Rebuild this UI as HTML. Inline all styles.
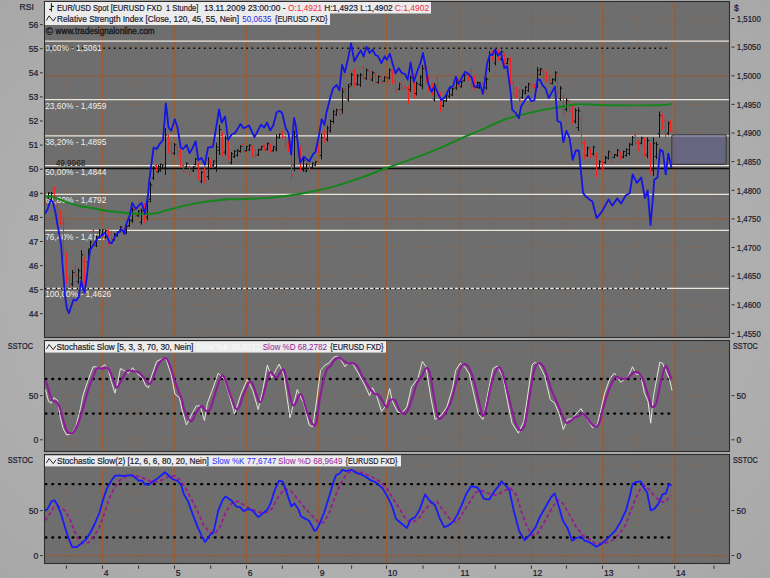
<!DOCTYPE html><html><head><meta charset="utf-8"><style>html,body{margin:0;padding:0;width:770px;height:578px;overflow:hidden;background:#b0b0b0}svg{display:block}text{font-family:"Liberation Sans",sans-serif}text.ax{stroke:#1a1a2e;stroke-width:0.2px}</style></head><body>
<svg width="770" height="578" viewBox="0 0 770 578">
<defs><radialGradient id="bg" cx="0.5" cy="0.5" r="0.75"><stop offset="0" stop-color="#bdbdbd"/><stop offset="1" stop-color="#a6a6a6"/></radialGradient>
<clipPath id="c0"><rect x="45.0" y="2.0" width="684.0" height="335.0"/></clipPath>
<clipPath id="c1"><rect x="45.0" y="341.0" width="684.0" height="110.0"/></clipPath>
<clipPath id="c2"><rect x="45.0" y="455.0" width="684.0" height="108.0"/></clipPath>
</defs>
<rect x="0" y="0" width="770" height="578" fill="url(#bg)"/>
<rect x="44.5" y="1.5" width="685.0" height="336.0" fill="#6e6e6e" stroke="#2e2e2e" stroke-width="1.1"/>
<rect x="44.5" y="340.5" width="685.0" height="111.0" fill="#6e6e6e" stroke="#2e2e2e" stroke-width="1.1"/>
<rect x="44.5" y="454.5" width="685.0" height="109.0" fill="#6e6e6e" stroke="#2e2e2e" stroke-width="1.1"/>
<g clip-path="url(#c0)">
<line x1="102.5" y1="1" x2="102.5" y2="337" stroke="#9c5a2c" stroke-width="0.9"/>
<line x1="174.5" y1="1" x2="174.5" y2="337" stroke="#9c5a2c" stroke-width="0.9"/>
<line x1="246.5" y1="1" x2="246.5" y2="337" stroke="#9c5a2c" stroke-width="0.9"/>
<line x1="318.5" y1="1" x2="318.5" y2="337" stroke="#9c5a2c" stroke-width="0.9"/>
<line x1="386.5" y1="1" x2="386.5" y2="337" stroke="#9c5a2c" stroke-width="0.9"/>
<line x1="459.2" y1="1" x2="459.2" y2="337" stroke="#9c5a2c" stroke-width="0.9"/>
<line x1="531.4" y1="1" x2="531.4" y2="337" stroke="#9c5a2c" stroke-width="0.9"/>
<line x1="602.6" y1="1" x2="602.6" y2="337" stroke="#9c5a2c" stroke-width="0.9"/>
<line x1="674.7" y1="1" x2="674.7" y2="337" stroke="#9c5a2c" stroke-width="0.9"/>
<line x1="66.4" y1="1" x2="66.4" y2="337" stroke="#9c5a2c" stroke-width="0.8" stroke-dasharray="0.8 2.96"/>
<line x1="138.6" y1="1" x2="138.6" y2="337" stroke="#9c5a2c" stroke-width="0.8" stroke-dasharray="0.8 2.96"/>
<line x1="210.7" y1="1" x2="210.7" y2="337" stroke="#9c5a2c" stroke-width="0.8" stroke-dasharray="0.8 2.96"/>
<line x1="282.3" y1="1" x2="282.3" y2="337" stroke="#9c5a2c" stroke-width="0.8" stroke-dasharray="0.8 2.96"/>
<line x1="351.6" y1="1" x2="351.6" y2="337" stroke="#9c5a2c" stroke-width="0.8" stroke-dasharray="0.8 2.96"/>
<line x1="423.0" y1="1" x2="423.0" y2="337" stroke="#9c5a2c" stroke-width="0.8" stroke-dasharray="0.8 2.96"/>
<line x1="495.3" y1="1" x2="495.3" y2="337" stroke="#9c5a2c" stroke-width="0.8" stroke-dasharray="0.8 2.96"/>
<line x1="566.4" y1="1" x2="566.4" y2="337" stroke="#9c5a2c" stroke-width="0.8" stroke-dasharray="0.8 2.96"/>
<line x1="638.7" y1="1" x2="638.7" y2="337" stroke="#9c5a2c" stroke-width="0.8" stroke-dasharray="0.8 2.96"/>
<line x1="714.0" y1="1" x2="714.0" y2="337" stroke="#9c5a2c" stroke-width="0.8" stroke-dasharray="0.8 2.96"/>
</g>
<g clip-path="url(#c1)">
<line x1="102.5" y1="340" x2="102.5" y2="451" stroke="#9c5a2c" stroke-width="0.9"/>
<line x1="174.5" y1="340" x2="174.5" y2="451" stroke="#9c5a2c" stroke-width="0.9"/>
<line x1="246.5" y1="340" x2="246.5" y2="451" stroke="#9c5a2c" stroke-width="0.9"/>
<line x1="318.5" y1="340" x2="318.5" y2="451" stroke="#9c5a2c" stroke-width="0.9"/>
<line x1="386.5" y1="340" x2="386.5" y2="451" stroke="#9c5a2c" stroke-width="0.9"/>
<line x1="459.2" y1="340" x2="459.2" y2="451" stroke="#9c5a2c" stroke-width="0.9"/>
<line x1="531.4" y1="340" x2="531.4" y2="451" stroke="#9c5a2c" stroke-width="0.9"/>
<line x1="602.6" y1="340" x2="602.6" y2="451" stroke="#9c5a2c" stroke-width="0.9"/>
<line x1="674.7" y1="340" x2="674.7" y2="451" stroke="#9c5a2c" stroke-width="0.9"/>
<line x1="66.4" y1="340" x2="66.4" y2="451" stroke="#9c5a2c" stroke-width="0.8" stroke-dasharray="0.8 2.96"/>
<line x1="138.6" y1="340" x2="138.6" y2="451" stroke="#9c5a2c" stroke-width="0.8" stroke-dasharray="0.8 2.96"/>
<line x1="210.7" y1="340" x2="210.7" y2="451" stroke="#9c5a2c" stroke-width="0.8" stroke-dasharray="0.8 2.96"/>
<line x1="282.3" y1="340" x2="282.3" y2="451" stroke="#9c5a2c" stroke-width="0.8" stroke-dasharray="0.8 2.96"/>
<line x1="351.6" y1="340" x2="351.6" y2="451" stroke="#9c5a2c" stroke-width="0.8" stroke-dasharray="0.8 2.96"/>
<line x1="423.0" y1="340" x2="423.0" y2="451" stroke="#9c5a2c" stroke-width="0.8" stroke-dasharray="0.8 2.96"/>
<line x1="495.3" y1="340" x2="495.3" y2="451" stroke="#9c5a2c" stroke-width="0.8" stroke-dasharray="0.8 2.96"/>
<line x1="566.4" y1="340" x2="566.4" y2="451" stroke="#9c5a2c" stroke-width="0.8" stroke-dasharray="0.8 2.96"/>
<line x1="638.7" y1="340" x2="638.7" y2="451" stroke="#9c5a2c" stroke-width="0.8" stroke-dasharray="0.8 2.96"/>
<line x1="714.0" y1="340" x2="714.0" y2="451" stroke="#9c5a2c" stroke-width="0.8" stroke-dasharray="0.8 2.96"/>
</g>
<g clip-path="url(#c2)">
<line x1="102.5" y1="454" x2="102.5" y2="563" stroke="#9c5a2c" stroke-width="0.9"/>
<line x1="174.5" y1="454" x2="174.5" y2="563" stroke="#9c5a2c" stroke-width="0.9"/>
<line x1="246.5" y1="454" x2="246.5" y2="563" stroke="#9c5a2c" stroke-width="0.9"/>
<line x1="318.5" y1="454" x2="318.5" y2="563" stroke="#9c5a2c" stroke-width="0.9"/>
<line x1="386.5" y1="454" x2="386.5" y2="563" stroke="#9c5a2c" stroke-width="0.9"/>
<line x1="459.2" y1="454" x2="459.2" y2="563" stroke="#9c5a2c" stroke-width="0.9"/>
<line x1="531.4" y1="454" x2="531.4" y2="563" stroke="#9c5a2c" stroke-width="0.9"/>
<line x1="602.6" y1="454" x2="602.6" y2="563" stroke="#9c5a2c" stroke-width="0.9"/>
<line x1="674.7" y1="454" x2="674.7" y2="563" stroke="#9c5a2c" stroke-width="0.9"/>
<line x1="66.4" y1="454" x2="66.4" y2="563" stroke="#9c5a2c" stroke-width="0.8" stroke-dasharray="0.8 2.96"/>
<line x1="138.6" y1="454" x2="138.6" y2="563" stroke="#9c5a2c" stroke-width="0.8" stroke-dasharray="0.8 2.96"/>
<line x1="210.7" y1="454" x2="210.7" y2="563" stroke="#9c5a2c" stroke-width="0.8" stroke-dasharray="0.8 2.96"/>
<line x1="282.3" y1="454" x2="282.3" y2="563" stroke="#9c5a2c" stroke-width="0.8" stroke-dasharray="0.8 2.96"/>
<line x1="351.6" y1="454" x2="351.6" y2="563" stroke="#9c5a2c" stroke-width="0.8" stroke-dasharray="0.8 2.96"/>
<line x1="423.0" y1="454" x2="423.0" y2="563" stroke="#9c5a2c" stroke-width="0.8" stroke-dasharray="0.8 2.96"/>
<line x1="495.3" y1="454" x2="495.3" y2="563" stroke="#9c5a2c" stroke-width="0.8" stroke-dasharray="0.8 2.96"/>
<line x1="566.4" y1="454" x2="566.4" y2="563" stroke="#9c5a2c" stroke-width="0.8" stroke-dasharray="0.8 2.96"/>
<line x1="638.7" y1="454" x2="638.7" y2="563" stroke="#9c5a2c" stroke-width="0.8" stroke-dasharray="0.8 2.96"/>
<line x1="714.0" y1="454" x2="714.0" y2="563" stroke="#9c5a2c" stroke-width="0.8" stroke-dasharray="0.8 2.96"/>
</g>
<line x1="44" y1="18.5" x2="729" y2="18.5" stroke="#9c5a2c" stroke-width="0.8" stroke-dasharray="0.8 2.96" clip-path="url(#c0)"/>
<line x1="44" y1="47.1" x2="729" y2="47.1" stroke="#9c5a2c" stroke-width="0.8" stroke-dasharray="0.8 2.96" clip-path="url(#c0)"/>
<line x1="44" y1="75.8" x2="729" y2="75.8" stroke="#9c5a2c" stroke-width="0.9" clip-path="url(#c0)"/>
<line x1="44" y1="104.4" x2="729" y2="104.4" stroke="#9c5a2c" stroke-width="0.8" stroke-dasharray="0.8 2.96" clip-path="url(#c0)"/>
<line x1="44" y1="133.0" x2="729" y2="133.0" stroke="#9c5a2c" stroke-width="0.8" stroke-dasharray="0.8 2.96" clip-path="url(#c0)"/>
<line x1="44" y1="161.6" x2="729" y2="161.6" stroke="#9c5a2c" stroke-width="0.8" stroke-dasharray="0.8 2.96" clip-path="url(#c0)"/>
<line x1="44" y1="190.3" x2="729" y2="190.3" stroke="#9c5a2c" stroke-width="0.8" stroke-dasharray="0.8 2.96" clip-path="url(#c0)"/>
<line x1="44" y1="218.9" x2="729" y2="218.9" stroke="#9c5a2c" stroke-width="0.9" clip-path="url(#c0)"/>
<line x1="44" y1="247.5" x2="729" y2="247.5" stroke="#9c5a2c" stroke-width="0.8" stroke-dasharray="0.8 2.96" clip-path="url(#c0)"/>
<line x1="44" y1="276.2" x2="729" y2="276.2" stroke="#9c5a2c" stroke-width="0.8" stroke-dasharray="0.8 2.96" clip-path="url(#c0)"/>
<line x1="44" y1="304.8" x2="729" y2="304.8" stroke="#9c5a2c" stroke-width="0.8" stroke-dasharray="0.8 2.96" clip-path="url(#c0)"/>
<line x1="44" y1="333.4" x2="729" y2="333.4" stroke="#9c5a2c" stroke-width="0.8" stroke-dasharray="0.8 2.96" clip-path="url(#c0)"/>
<line x1="44" y1="351.6" x2="729" y2="351.6" stroke="#9c5a2c" stroke-width="0.8" stroke-dasharray="0.8 2.96" clip-path="url(#c1)"/>
<line x1="44" y1="395.7" x2="729" y2="395.7" stroke="#9c5a2c" stroke-width="0.8" stroke-dasharray="0.8 2.96" clip-path="url(#c1)"/>
<line x1="44" y1="439.8" x2="729" y2="439.8" stroke="#9c5a2c" stroke-width="0.8" stroke-dasharray="0.8 2.96" clip-path="url(#c1)"/>
<line x1="44" y1="465.5" x2="729" y2="465.5" stroke="#9c5a2c" stroke-width="0.8" stroke-dasharray="0.8 2.96" clip-path="url(#c2)"/>
<line x1="44" y1="510.6" x2="729" y2="510.6" stroke="#9c5a2c" stroke-width="0.8" stroke-dasharray="0.8 2.96" clip-path="url(#c2)"/>
<line x1="44" y1="555.6" x2="729" y2="555.6" stroke="#9c5a2c" stroke-width="0.9" clip-path="url(#c2)"/>
<g clip-path="url(#c0)">
<line x1="44" y1="41.0" x2="729" y2="41.0" stroke="#ebe6dc" stroke-width="1.25"/>
<line x1="44" y1="99.5" x2="729" y2="99.5" stroke="#ebe6dc" stroke-width="1.25"/>
<line x1="44" y1="135.8" x2="729" y2="135.8" stroke="#ebe6dc" stroke-width="1.25"/>
<line x1="44" y1="165.7" x2="729" y2="165.7" stroke="#ebe6dc" stroke-width="1.25"/>
<line x1="44" y1="194.4" x2="729" y2="194.4" stroke="#ebe6dc" stroke-width="1.25"/>
<line x1="44" y1="230.4" x2="729" y2="230.4" stroke="#ebe6dc" stroke-width="1.25"/>
<line x1="44" y1="288.4" x2="729" y2="288.4" stroke="#ebe6dc" stroke-width="1.25"/>
<line x1="44" y1="168.5" x2="729" y2="168.5" stroke="#080808" stroke-width="1.5"/>
<rect x="671.8" y="134.8" width="54.4" height="29.6" rx="1.5" fill="#5e5e94" fill-opacity="0.5" stroke="#3c3c44" stroke-width="1.1"/>
<line x1="45" y1="48.2" x2="669" y2="48.2" stroke="#000" stroke-width="1.5" stroke-dasharray="1.5 3.8"/>
<line x1="45" y1="288.4" x2="669" y2="288.4" stroke="#000" stroke-width="1.5" stroke-dasharray="1.5 3.8"/>
<text x="45.2" y="50.5" font-size="8.4" fill="#f2f0ea" textLength="56.5" lengthAdjust="spacingAndGlyphs">0,00% - 1,5061</text>
<text x="45.2" y="109.0" font-size="8.4" fill="#f2f0ea" textLength="61.1" lengthAdjust="spacingAndGlyphs">23,60% - 1,4959</text>
<text x="45.2" y="145.3" font-size="8.4" fill="#f2f0ea" textLength="61.1" lengthAdjust="spacingAndGlyphs">38,20% - 1,4895</text>
<text x="45.2" y="174.9" font-size="8.4" fill="#f2f0ea" textLength="61.1" lengthAdjust="spacingAndGlyphs">50,00% - 1,4844</text>
<text x="45.2" y="203.3" font-size="8.4" fill="#f2f0ea" textLength="61.1" lengthAdjust="spacingAndGlyphs">61,80% - 1,4792</text>
<text x="45.2" y="239.5" font-size="8.4" fill="#f2f0ea" textLength="61.1" lengthAdjust="spacingAndGlyphs">76,40% - 1,4727</text>
<text x="45.2" y="297.3" font-size="8.4" fill="#f2f0ea" textLength="66.0" lengthAdjust="spacingAndGlyphs">100,00% - 1,4626</text>
<text x="55.7" y="166.3" font-size="8.4" fill="#151515" textLength="29.6" lengthAdjust="spacingAndGlyphs">49,9968</text>
<path d="M45.5 189.8V205.6M45.5 192.2h-1.8M45.5 203.2h1.8" stroke="#f02424" stroke-width="1" fill="none"/>
<path d="M48.5 192.0V199.0M48.5 197.9h-1.8M48.5 193.1h1.8" stroke="#101010" stroke-width="1" fill="none"/>
<path d="M51.5 192.0V200.8M51.5 199.5h-1.8M51.5 193.3h1.8" stroke="#101010" stroke-width="1" fill="none"/>
<path d="M54.5 186.2V198.3M54.5 188.0h-1.8M54.5 196.5h1.8" stroke="#f02424" stroke-width="1" fill="none"/>
<path d="M57.5 203.0V221.0M57.5 205.7h-1.8M57.5 218.3h1.8" stroke="#f02424" stroke-width="1" fill="none"/>
<path d="M60.5 209.8V225.6M60.5 212.2h-1.8M60.5 223.2h1.8" stroke="#f02424" stroke-width="1" fill="none"/>
<path d="M63.5 217.0V258.0M63.5 223.2h-1.8M63.5 251.8h1.8" stroke="#f02424" stroke-width="1" fill="none"/>
<path d="M66.5 252.8V284.0M66.5 257.5h-1.8M66.5 279.3h1.8" stroke="#f02424" stroke-width="1" fill="none"/>
<path d="M69.5 276.0V288.0M69.5 277.8h-1.8M69.5 286.2h1.8" stroke="#f02424" stroke-width="1" fill="none"/>
<path d="M72.5 270.0V286.6M72.5 284.1h-1.8M72.5 272.5h1.8" stroke="#101010" stroke-width="1" fill="none"/>
<path d="M75.5 265.0V276.8M75.5 266.8h-1.8M75.5 275.0h1.8" stroke="#f02424" stroke-width="1" fill="none"/>
<path d="M78.5 268.4V284.0M78.5 281.7h-1.8M78.5 270.7h1.8" stroke="#101010" stroke-width="1" fill="none"/>
<path d="M81.5 250.0V282.7M81.5 277.8h-1.8M81.5 254.9h1.8" stroke="#101010" stroke-width="1" fill="none"/>
<path d="M84.5 257.3V285.3M84.5 261.5h-1.8M84.5 281.1h1.8" stroke="#f02424" stroke-width="1" fill="none"/>
<path d="M88.5 249.0V264.5M88.5 262.2h-1.8M88.5 251.3h1.8" stroke="#101010" stroke-width="1" fill="none"/>
<path d="M90.5 240.7V250.0M90.5 248.6h-1.8M90.5 242.1h1.8" stroke="#101010" stroke-width="1" fill="none"/>
<path d="M93.5 228.8V244.9M93.5 231.2h-1.8M93.5 242.5h1.8" stroke="#f02424" stroke-width="1" fill="none"/>
<path d="M96.5 235.5V247.0M96.5 245.3h-1.8M96.5 237.2h1.8" stroke="#101010" stroke-width="1" fill="none"/>
<path d="M99.5 228.8V238.6M99.5 237.1h-1.8M99.5 230.3h1.8" stroke="#101010" stroke-width="1" fill="none"/>
<path d="M102.5 229.0V235.5M102.5 234.5h-1.8M102.5 230.0h1.8" stroke="#101010" stroke-width="1" fill="none"/>
<path d="M105.5 229.3V238.6M105.5 237.2h-1.8M105.5 230.7h1.8" stroke="#101010" stroke-width="1" fill="none"/>
<path d="M108.5 228.8V244.9M108.5 231.2h-1.8M108.5 242.5h1.8" stroke="#f02424" stroke-width="1" fill="none"/>
<path d="M111.5 230.8V240.7M111.5 232.3h-1.8M111.5 239.2h1.8" stroke="#f02424" stroke-width="1" fill="none"/>
<path d="M114.5 233.0V240.7M114.5 239.5h-1.8M114.5 234.2h1.8" stroke="#101010" stroke-width="1" fill="none"/>
<path d="M117.5 231.4V236.6M117.5 235.8h-1.8M117.5 232.2h1.8" stroke="#101010" stroke-width="1" fill="none"/>
<path d="M120.5 226.2V232.4M120.5 231.5h-1.8M120.5 227.1h1.8" stroke="#101010" stroke-width="1" fill="none"/>
<path d="M123.5 228.2V231.4M123.5 228.7h-1.8M123.5 230.9h1.8" stroke="#f02424" stroke-width="1" fill="none"/>
<path d="M126.5 225.1V234.0M126.5 232.7h-1.8M126.5 226.4h1.8" stroke="#101010" stroke-width="1" fill="none"/>
<path d="M129.5 218.9V226.7M129.5 225.5h-1.8M129.5 220.1h1.8" stroke="#101010" stroke-width="1" fill="none"/>
<path d="M132.5 207.5V223.0M132.5 220.7h-1.8M132.5 209.8h1.8" stroke="#101010" stroke-width="1" fill="none"/>
<path d="M135.5 207.5V216.8M135.5 208.9h-1.8M135.5 215.4h1.8" stroke="#f02424" stroke-width="1" fill="none"/>
<path d="M138.5 210.0V216.8M138.5 215.8h-1.8M138.5 211.0h1.8" stroke="#101010" stroke-width="1" fill="none"/>
<path d="M141.5 208.5V224.6M141.5 222.2h-1.8M141.5 210.9h1.8" stroke="#101010" stroke-width="1" fill="none"/>
<path d="M144.5 203.3V223.0M144.5 206.3h-1.8M144.5 220.0h1.8" stroke="#f02424" stroke-width="1" fill="none"/>
<path d="M147.5 198.0V220.5M147.5 217.1h-1.8M147.5 201.4h1.8" stroke="#101010" stroke-width="1" fill="none"/>
<path d="M150.5 182.0V202.3M150.5 199.3h-1.8M150.5 185.0h1.8" stroke="#101010" stroke-width="1" fill="none"/>
<path d="M153.5 166.0V180.0M153.5 177.9h-1.8M153.5 168.1h1.8" stroke="#101010" stroke-width="1" fill="none"/>
<path d="M156.5 164.6V171.5M156.5 165.6h-1.8M156.5 170.5h1.8" stroke="#f02424" stroke-width="1" fill="none"/>
<path d="M158.5 165.0V173.0M158.5 171.8h-1.8M158.5 166.2h1.8" stroke="#101010" stroke-width="1" fill="none"/>
<path d="M160.5 163.4V171.8M160.5 170.5h-1.8M160.5 164.7h1.8" stroke="#101010" stroke-width="1" fill="none"/>
<path d="M162.5 164.5V168.6M162.5 168.0h-1.8M162.5 165.1h1.8" stroke="#101010" stroke-width="1" fill="none"/>
<path d="M165.5 128.0V174.9M165.5 167.9h-1.8M165.5 135.0h1.8" stroke="#101010" stroke-width="1" fill="none"/>
<path d="M168.5 134.9V153.6M168.5 137.7h-1.8M168.5 150.8h1.8" stroke="#f02424" stroke-width="1" fill="none"/>
<path d="M171.5 142.0V155.0M171.5 143.9h-1.8M171.5 153.1h1.8" stroke="#f02424" stroke-width="1" fill="none"/>
<path d="M174.5 143.0V155.0M174.5 153.2h-1.8M174.5 144.8h1.8" stroke="#101010" stroke-width="1" fill="none"/>
<path d="M177.5 145.8V157.2M177.5 147.5h-1.8M177.5 155.5h1.8" stroke="#f02424" stroke-width="1" fill="none"/>
<path d="M180.5 149.0V167.6M180.5 151.8h-1.8M180.5 164.8h1.8" stroke="#f02424" stroke-width="1" fill="none"/>
<path d="M183.5 164.5V172.8M183.5 165.7h-1.8M183.5 171.6h1.8" stroke="#f02424" stroke-width="1" fill="none"/>
<path d="M186.5 162.4V167.6M186.5 166.8h-1.8M186.5 163.2h1.8" stroke="#101010" stroke-width="1" fill="none"/>
<path d="M189.5 165.5V175.9M189.5 167.1h-1.8M189.5 174.3h1.8" stroke="#f02424" stroke-width="1" fill="none"/>
<path d="M193.5 166.0V171.8M193.5 170.9h-1.8M193.5 166.9h1.8" stroke="#101010" stroke-width="1" fill="none"/>
<path d="M195.5 158.0V165.5M195.5 164.4h-1.8M195.5 159.1h1.8" stroke="#101010" stroke-width="1" fill="none"/>
<path d="M198.5 162.4V180.0M198.5 165.0h-1.8M198.5 177.4h1.8" stroke="#f02424" stroke-width="1" fill="none"/>
<path d="M201.5 170.7V183.2M201.5 181.3h-1.8M201.5 172.6h1.8" stroke="#101010" stroke-width="1" fill="none"/>
<path d="M204.5 167.6V183.2M204.5 169.9h-1.8M204.5 180.9h1.8" stroke="#f02424" stroke-width="1" fill="none"/>
<path d="M208.5 157.2V180.0M208.5 176.6h-1.8M208.5 160.6h1.8" stroke="#101010" stroke-width="1" fill="none"/>
<path d="M210.5 159.3V167.6M210.5 160.5h-1.8M210.5 166.4h1.8" stroke="#f02424" stroke-width="1" fill="none"/>
<path d="M213.5 160.3V166.6M213.5 165.7h-1.8M213.5 161.2h1.8" stroke="#101010" stroke-width="1" fill="none"/>
<path d="M216.5 142.7V171.8M216.5 167.4h-1.8M216.5 147.1h1.8" stroke="#101010" stroke-width="1" fill="none"/>
<path d="M219.5 125.0V155.0M219.5 150.5h-1.8M219.5 129.5h1.8" stroke="#101010" stroke-width="1" fill="none"/>
<path d="M222.5 131.8V156.2M222.5 135.5h-1.8M222.5 152.5h1.8" stroke="#f02424" stroke-width="1" fill="none"/>
<path d="M225.5 135.4V155.1M225.5 152.1h-1.8M225.5 138.4h1.8" stroke="#101010" stroke-width="1" fill="none"/>
<path d="M228.5 140.6V160.3M228.5 143.6h-1.8M228.5 157.3h1.8" stroke="#f02424" stroke-width="1" fill="none"/>
<path d="M231.5 152.0V164.5M231.5 162.6h-1.8M231.5 153.9h1.8" stroke="#101010" stroke-width="1" fill="none"/>
<path d="M234.5 150.0V158.0M234.5 156.8h-1.8M234.5 151.2h1.8" stroke="#101010" stroke-width="1" fill="none"/>
<path d="M237.5 149.2V156.6M237.5 155.5h-1.8M237.5 150.3h1.8" stroke="#101010" stroke-width="1" fill="none"/>
<path d="M240.5 145.3V152.6M240.5 151.5h-1.8M240.5 146.4h1.8" stroke="#101010" stroke-width="1" fill="none"/>
<path d="M243.5 143.0V153.2M243.5 144.5h-1.8M243.5 151.7h1.8" stroke="#f02424" stroke-width="1" fill="none"/>
<path d="M246.5 145.9V151.5M246.5 150.7h-1.8M246.5 146.7h1.8" stroke="#101010" stroke-width="1" fill="none"/>
<path d="M249.5 144.2V150.9M249.5 149.9h-1.8M249.5 145.2h1.8" stroke="#101010" stroke-width="1" fill="none"/>
<path d="M252.5 145.3V157.1M252.5 147.1h-1.8M252.5 155.3h1.8" stroke="#f02424" stroke-width="1" fill="none"/>
<path d="M255.5 149.2V157.1M255.5 150.4h-1.8M255.5 155.9h1.8" stroke="#f02424" stroke-width="1" fill="none"/>
<path d="M258.5 148.7V156.0M258.5 154.9h-1.8M258.5 149.8h1.8" stroke="#101010" stroke-width="1" fill="none"/>
<path d="M261.5 145.9V150.4M261.5 149.7h-1.8M261.5 146.6h1.8" stroke="#101010" stroke-width="1" fill="none"/>
<path d="M264.5 144.7V150.9M264.5 145.6h-1.8M264.5 150.0h1.8" stroke="#f02424" stroke-width="1" fill="none"/>
<path d="M267.5 142.5V150.4M267.5 149.2h-1.8M267.5 143.7h1.8" stroke="#101010" stroke-width="1" fill="none"/>
<path d="M270.5 143.6V152.6M270.5 144.9h-1.8M270.5 151.2h1.8" stroke="#f02424" stroke-width="1" fill="none"/>
<path d="M273.5 145.9V151.5M273.5 150.7h-1.8M273.5 146.7h1.8" stroke="#101010" stroke-width="1" fill="none"/>
<path d="M276.5 134.6V151.5M276.5 149.0h-1.8M276.5 137.1h1.8" stroke="#101010" stroke-width="1" fill="none"/>
<path d="M279.5 133.5V138.6M279.5 137.8h-1.8M279.5 134.3h1.8" stroke="#101010" stroke-width="1" fill="none"/>
<path d="M282.5 130.7V138.0M282.5 131.8h-1.8M282.5 136.9h1.8" stroke="#f02424" stroke-width="1" fill="none"/>
<path d="M285.5 135.7V147.6M285.5 137.5h-1.8M285.5 145.8h1.8" stroke="#f02424" stroke-width="1" fill="none"/>
<path d="M288.5 140.2V152.0M288.5 142.0h-1.8M288.5 150.2h1.8" stroke="#f02424" stroke-width="1" fill="none"/>
<path d="M291.5 141.4V181.3M291.5 147.4h-1.8M291.5 175.3h1.8" stroke="#f02424" stroke-width="1" fill="none"/>
<path d="M294.5 130.7V171.2M294.5 165.1h-1.8M294.5 136.8h1.8" stroke="#101010" stroke-width="1" fill="none"/>
<path d="M297.5 124.5V158.2M297.5 129.6h-1.8M297.5 153.1h1.8" stroke="#f02424" stroke-width="1" fill="none"/>
<path d="M300.5 145.9V171.2M300.5 149.7h-1.8M300.5 167.4h1.8" stroke="#f02424" stroke-width="1" fill="none"/>
<path d="M303.5 158.2V171.7M303.5 169.7h-1.8M303.5 160.2h1.8" stroke="#101010" stroke-width="1" fill="none"/>
<path d="M306.5 163.3V172.3M306.5 171.0h-1.8M306.5 164.7h1.8" stroke="#101010" stroke-width="1" fill="none"/>
<path d="M309.5 163.3V170.6M309.5 164.4h-1.8M309.5 169.5h1.8" stroke="#f02424" stroke-width="1" fill="none"/>
<path d="M312.5 162.4V168.3M312.5 167.4h-1.8M312.5 163.3h1.8" stroke="#101010" stroke-width="1" fill="none"/>
<path d="M315.5 161.0V166.0M315.5 165.2h-1.8M315.5 161.8h1.8" stroke="#101010" stroke-width="1" fill="none"/>
<path d="M318.5 145.5V153.4M318.5 146.7h-1.8M318.5 152.2h1.8" stroke="#f02424" stroke-width="1" fill="none"/>
<path d="M321.5 133.6V159.4M321.5 155.5h-1.8M321.5 137.5h1.8" stroke="#101010" stroke-width="1" fill="none"/>
<path d="M324.5 129.6V142.5M324.5 131.5h-1.8M324.5 140.6h1.8" stroke="#f02424" stroke-width="1" fill="none"/>
<path d="M327.5 125.6V141.5M327.5 139.1h-1.8M327.5 128.0h1.8" stroke="#101010" stroke-width="1" fill="none"/>
<path d="M330.5 119.6V132.6M330.5 130.7h-1.8M330.5 121.5h1.8" stroke="#101010" stroke-width="1" fill="none"/>
<path d="M333.5 109.7V123.6M333.5 121.5h-1.8M333.5 111.8h1.8" stroke="#101010" stroke-width="1" fill="none"/>
<path d="M336.5 108.7V115.7M336.5 114.7h-1.8M336.5 109.8h1.8" stroke="#101010" stroke-width="1" fill="none"/>
<path d="M339.5 108.7V115.7M339.5 109.8h-1.8M339.5 114.7h1.8" stroke="#f02424" stroke-width="1" fill="none"/>
<path d="M342.5 87.8V113.7M342.5 109.8h-1.8M342.5 91.7h1.8" stroke="#101010" stroke-width="1" fill="none"/>
<path d="M345.5 86.8V98.8M345.5 88.6h-1.8M345.5 97.0h1.8" stroke="#f02424" stroke-width="1" fill="none"/>
<path d="M348.5 83.9V101.8M348.5 99.1h-1.8M348.5 86.6h1.8" stroke="#101010" stroke-width="1" fill="none"/>
<path d="M351.5 72.9V85.8M351.5 83.9h-1.8M351.5 74.8h1.8" stroke="#101010" stroke-width="1" fill="none"/>
<path d="M354.5 68.9V86.8M354.5 71.6h-1.8M354.5 84.1h1.8" stroke="#f02424" stroke-width="1" fill="none"/>
<path d="M357.5 73.9V85.8M357.5 84.0h-1.8M357.5 75.7h1.8" stroke="#101010" stroke-width="1" fill="none"/>
<path d="M360.5 73.0V86.8M360.5 84.7h-1.8M360.5 75.1h1.8" stroke="#101010" stroke-width="1" fill="none"/>
<path d="M363.5 65.0V80.9M363.5 67.4h-1.8M363.5 78.5h1.8" stroke="#f02424" stroke-width="1" fill="none"/>
<path d="M366.5 68.5V79.9M366.5 78.2h-1.8M366.5 70.2h1.8" stroke="#101010" stroke-width="1" fill="none"/>
<path d="M369.5 69.5V78.9M369.5 70.9h-1.8M369.5 77.5h1.8" stroke="#f02424" stroke-width="1" fill="none"/>
<path d="M372.5 71.1V81.5M372.5 79.9h-1.8M372.5 72.7h1.8" stroke="#101010" stroke-width="1" fill="none"/>
<path d="M375.5 72.1V84.1M375.5 73.9h-1.8M375.5 82.3h1.8" stroke="#f02424" stroke-width="1" fill="none"/>
<path d="M378.5 75.3V83.6M378.5 82.4h-1.8M378.5 76.5h1.8" stroke="#101010" stroke-width="1" fill="none"/>
<path d="M381.5 76.8V83.6M381.5 77.8h-1.8M381.5 82.6h1.8" stroke="#f02424" stroke-width="1" fill="none"/>
<path d="M384.5 76.3V82.0M384.5 81.1h-1.8M384.5 77.2h1.8" stroke="#101010" stroke-width="1" fill="none"/>
<path d="M387.5 75.3V83.0M387.5 76.5h-1.8M387.5 81.8h1.8" stroke="#f02424" stroke-width="1" fill="none"/>
<path d="M389.5 68.5V79.4M389.5 77.8h-1.8M389.5 70.1h1.8" stroke="#101010" stroke-width="1" fill="none"/>
<path d="M392.5 69.5V84.6M392.5 71.8h-1.8M392.5 82.3h1.8" stroke="#f02424" stroke-width="1" fill="none"/>
<path d="M395.5 79.4V92.9M395.5 81.4h-1.8M395.5 90.9h1.8" stroke="#f02424" stroke-width="1" fill="none"/>
<path d="M399.5 82.5V90.3M399.5 89.1h-1.8M399.5 83.7h1.8" stroke="#101010" stroke-width="1" fill="none"/>
<path d="M401.5 82.5V89.3M401.5 83.5h-1.8M401.5 88.3h1.8" stroke="#f02424" stroke-width="1" fill="none"/>
<path d="M405.5 86.2V89.8M405.5 86.7h-1.8M405.5 89.3h1.8" stroke="#f02424" stroke-width="1" fill="none"/>
<path d="M408.5 85.1V103.8M408.5 87.9h-1.8M408.5 101.0h1.8" stroke="#f02424" stroke-width="1" fill="none"/>
<path d="M410.5 75.3V91.9M410.5 89.4h-1.8M410.5 77.8h1.8" stroke="#101010" stroke-width="1" fill="none"/>
<path d="M414.5 75.3V98.1M414.5 78.7h-1.8M414.5 94.7h1.8" stroke="#f02424" stroke-width="1" fill="none"/>
<path d="M416.5 81.5V95.5M416.5 93.4h-1.8M416.5 83.6h1.8" stroke="#101010" stroke-width="1" fill="none"/>
<path d="M420.5 75.3V86.2M420.5 84.6h-1.8M420.5 76.9h1.8" stroke="#101010" stroke-width="1" fill="none"/>
<path d="M422.5 64.9V89.3M422.5 85.6h-1.8M422.5 68.6h1.8" stroke="#101010" stroke-width="1" fill="none"/>
<path d="M426.5 65.9V82.5M426.5 68.4h-1.8M426.5 80.0h1.8" stroke="#f02424" stroke-width="1" fill="none"/>
<path d="M428.5 75.8V91.4M428.5 78.1h-1.8M428.5 89.1h1.8" stroke="#f02424" stroke-width="1" fill="none"/>
<path d="M432.5 83.0V95.5M432.5 84.9h-1.8M432.5 93.6h1.8" stroke="#f02424" stroke-width="1" fill="none"/>
<path d="M434.5 83.0V101.8M434.5 99.0h-1.8M434.5 85.8h1.8" stroke="#101010" stroke-width="1" fill="none"/>
<path d="M437.5 74.7V96.6M437.5 78.0h-1.8M437.5 93.3h1.8" stroke="#f02424" stroke-width="1" fill="none"/>
<path d="M440.5 91.4V111.6M440.5 94.4h-1.8M440.5 108.6h1.8" stroke="#f02424" stroke-width="1" fill="none"/>
<path d="M443.5 99.7V107.0M443.5 105.9h-1.8M443.5 100.8h1.8" stroke="#101010" stroke-width="1" fill="none"/>
<path d="M446.5 94.0V102.0M446.5 100.8h-1.8M446.5 95.2h1.8" stroke="#101010" stroke-width="1" fill="none"/>
<path d="M449.5 86.7V98.1M449.5 96.4h-1.8M449.5 88.4h1.8" stroke="#101010" stroke-width="1" fill="none"/>
<path d="M452.5 87.7V96.0M452.5 94.8h-1.8M452.5 88.9h1.8" stroke="#101010" stroke-width="1" fill="none"/>
<path d="M456.5 77.3V89.8M456.5 87.9h-1.8M456.5 79.2h1.8" stroke="#101010" stroke-width="1" fill="none"/>
<path d="M458.5 79.4V86.7M458.5 80.5h-1.8M458.5 85.6h1.8" stroke="#f02424" stroke-width="1" fill="none"/>
<path d="M461.5 81.0V87.7M461.5 86.7h-1.8M461.5 82.0h1.8" stroke="#101010" stroke-width="1" fill="none"/>
<path d="M464.5 73.7V81.5M464.5 80.3h-1.8M464.5 74.9h1.8" stroke="#101010" stroke-width="1" fill="none"/>
<path d="M468.5 73.2V81.0M468.5 74.4h-1.8M468.5 79.8h1.8" stroke="#f02424" stroke-width="1" fill="none"/>
<path d="M471.5 68.0V89.8M471.5 71.3h-1.8M471.5 86.5h1.8" stroke="#f02424" stroke-width="1" fill="none"/>
<path d="M474.5 75.2V89.8M474.5 77.4h-1.8M474.5 87.6h1.8" stroke="#f02424" stroke-width="1" fill="none"/>
<path d="M477.5 81.5V88.2M477.5 87.2h-1.8M477.5 82.5h1.8" stroke="#101010" stroke-width="1" fill="none"/>
<path d="M479.5 82.0V88.8M479.5 87.8h-1.8M479.5 83.0h1.8" stroke="#101010" stroke-width="1" fill="none"/>
<path d="M483.5 82.5V94.0M483.5 84.2h-1.8M483.5 92.3h1.8" stroke="#f02424" stroke-width="1" fill="none"/>
<path d="M486.5 77.3V89.8M486.5 87.9h-1.8M486.5 79.2h1.8" stroke="#101010" stroke-width="1" fill="none"/>
<path d="M489.5 51.4V72.1M489.5 69.0h-1.8M489.5 54.5h1.8" stroke="#101010" stroke-width="1" fill="none"/>
<path d="M492.5 50.3V60.7M492.5 51.9h-1.8M492.5 59.1h1.8" stroke="#f02424" stroke-width="1" fill="none"/>
<path d="M495.5 49.3V65.4M495.5 63.0h-1.8M495.5 51.7h1.8" stroke="#101010" stroke-width="1" fill="none"/>
<path d="M498.5 49.3V60.7M498.5 51.0h-1.8M498.5 59.0h1.8" stroke="#f02424" stroke-width="1" fill="none"/>
<path d="M501.5 50.3V60.7M501.5 59.1h-1.8M501.5 51.9h1.8" stroke="#101010" stroke-width="1" fill="none"/>
<path d="M504.5 53.4V68.0M504.5 55.6h-1.8M504.5 65.8h1.8" stroke="#f02424" stroke-width="1" fill="none"/>
<path d="M507.5 58.1V64.3M507.5 63.4h-1.8M507.5 59.0h1.8" stroke="#101010" stroke-width="1" fill="none"/>
<path d="M510.5 57.1V86.7M510.5 61.5h-1.8M510.5 82.3h1.8" stroke="#f02424" stroke-width="1" fill="none"/>
<path d="M513.5 80.5V96.6M513.5 82.9h-1.8M513.5 94.2h1.8" stroke="#f02424" stroke-width="1" fill="none"/>
<path d="M516.5 86.6V98.2M516.5 88.3h-1.8M516.5 96.5h1.8" stroke="#f02424" stroke-width="1" fill="none"/>
<path d="M519.5 88.8V102.1M519.5 90.8h-1.8M519.5 100.1h1.8" stroke="#f02424" stroke-width="1" fill="none"/>
<path d="M522.5 89.4V98.8M522.5 97.4h-1.8M522.5 90.8h1.8" stroke="#101010" stroke-width="1" fill="none"/>
<path d="M525.5 86.0V94.3M525.5 93.1h-1.8M525.5 87.2h1.8" stroke="#101010" stroke-width="1" fill="none"/>
<path d="M528.5 82.7V92.1M528.5 90.7h-1.8M528.5 84.1h1.8" stroke="#101010" stroke-width="1" fill="none"/>
<path d="M531.5 83.3V87.7M531.5 84.0h-1.8M531.5 87.0h1.8" stroke="#f02424" stroke-width="1" fill="none"/>
<path d="M534.5 84.0V88.5M534.5 84.7h-1.8M534.5 87.8h1.8" stroke="#f02424" stroke-width="1" fill="none"/>
<path d="M537.5 67.2V87.7M537.5 84.6h-1.8M537.5 70.3h1.8" stroke="#101010" stroke-width="1" fill="none"/>
<path d="M540.5 67.8V75.5M540.5 74.3h-1.8M540.5 69.0h1.8" stroke="#101010" stroke-width="1" fill="none"/>
<path d="M543.5 70.0V79.4M543.5 71.4h-1.8M543.5 78.0h1.8" stroke="#f02424" stroke-width="1" fill="none"/>
<path d="M546.5 70.5V82.2M546.5 72.3h-1.8M546.5 80.4h1.8" stroke="#f02424" stroke-width="1" fill="none"/>
<path d="M549.5 75.5V83.8M549.5 76.7h-1.8M549.5 82.6h1.8" stroke="#f02424" stroke-width="1" fill="none"/>
<path d="M552.5 78.3V84.4M552.5 83.5h-1.8M552.5 79.2h1.8" stroke="#101010" stroke-width="1" fill="none"/>
<path d="M555.5 71.1V81.6M555.5 80.0h-1.8M555.5 72.7h1.8" stroke="#101010" stroke-width="1" fill="none"/>
<path d="M557.5 71.1V96.6M557.5 74.9h-1.8M557.5 92.8h1.8" stroke="#f02424" stroke-width="1" fill="none"/>
<path d="M560.5 86.0V101.0M560.5 98.8h-1.8M560.5 88.2h1.8" stroke="#101010" stroke-width="1" fill="none"/>
<path d="M563.5 94.9V117.6M563.5 98.3h-1.8M563.5 114.2h1.8" stroke="#f02424" stroke-width="1" fill="none"/>
<path d="M566.5 98.2V111.5M566.5 109.5h-1.8M566.5 100.2h1.8" stroke="#101010" stroke-width="1" fill="none"/>
<path d="M569.5 99.9V113.2M569.5 101.9h-1.8M569.5 111.2h1.8" stroke="#f02424" stroke-width="1" fill="none"/>
<path d="M572.5 103.2V124.0M572.5 106.3h-1.8M572.5 120.9h1.8" stroke="#f02424" stroke-width="1" fill="none"/>
<path d="M575.5 108.3V123.5M575.5 121.2h-1.8M575.5 110.6h1.8" stroke="#101010" stroke-width="1" fill="none"/>
<path d="M578.5 107.6V131.1M578.5 127.6h-1.8M578.5 111.1h1.8" stroke="#101010" stroke-width="1" fill="none"/>
<path d="M581.5 113.8V148.4M581.5 119.0h-1.8M581.5 143.2h1.8" stroke="#f02424" stroke-width="1" fill="none"/>
<path d="M584.5 140.1V159.5M584.5 143.0h-1.8M584.5 156.6h1.8" stroke="#f02424" stroke-width="1" fill="none"/>
<path d="M587.5 146.4V156.7M587.5 155.2h-1.8M587.5 147.9h1.8" stroke="#101010" stroke-width="1" fill="none"/>
<path d="M590.5 148.4V158.1M590.5 149.9h-1.8M590.5 156.6h1.8" stroke="#f02424" stroke-width="1" fill="none"/>
<path d="M593.5 145.7V155.4M593.5 153.9h-1.8M593.5 147.2h1.8" stroke="#101010" stroke-width="1" fill="none"/>
<path d="M596.5 152.6V177.5M596.5 156.3h-1.8M596.5 173.8h1.8" stroke="#f02424" stroke-width="1" fill="none"/>
<path d="M599.5 160.2V169.2M599.5 167.8h-1.8M599.5 161.5h1.8" stroke="#101010" stroke-width="1" fill="none"/>
<path d="M602.5 160.9V170.6M602.5 162.4h-1.8M602.5 169.1h1.8" stroke="#f02424" stroke-width="1" fill="none"/>
<path d="M605.5 156.0V163.7M605.5 162.5h-1.8M605.5 157.2h1.8" stroke="#101010" stroke-width="1" fill="none"/>
<path d="M608.5 150.5V159.5M608.5 158.2h-1.8M608.5 151.8h1.8" stroke="#101010" stroke-width="1" fill="none"/>
<path d="M611.5 152.6V163.0M611.5 154.2h-1.8M611.5 161.4h1.8" stroke="#f02424" stroke-width="1" fill="none"/>
<path d="M614.5 154.0V158.1M614.5 157.5h-1.8M614.5 154.6h1.8" stroke="#101010" stroke-width="1" fill="none"/>
<path d="M617.5 149.1V156.7M617.5 155.6h-1.8M617.5 150.2h1.8" stroke="#101010" stroke-width="1" fill="none"/>
<path d="M620.5 151.2V159.5M620.5 152.4h-1.8M620.5 158.3h1.8" stroke="#f02424" stroke-width="1" fill="none"/>
<path d="M623.5 150.5V158.1M623.5 157.0h-1.8M623.5 151.6h1.8" stroke="#101010" stroke-width="1" fill="none"/>
<path d="M626.5 148.4V156.7M626.5 155.5h-1.8M626.5 149.6h1.8" stroke="#101010" stroke-width="1" fill="none"/>
<path d="M629.5 142.9V155.4M629.5 153.5h-1.8M629.5 144.8h1.8" stroke="#101010" stroke-width="1" fill="none"/>
<path d="M632.5 136.0V145.7M632.5 144.2h-1.8M632.5 137.5h1.8" stroke="#101010" stroke-width="1" fill="none"/>
<path d="M635.5 133.2V145.0M635.5 135.0h-1.8M635.5 143.2h1.8" stroke="#f02424" stroke-width="1" fill="none"/>
<path d="M638.5 140.1V151.2M638.5 141.8h-1.8M638.5 149.5h1.8" stroke="#f02424" stroke-width="1" fill="none"/>
<path d="M641.5 136.7V144.3M641.5 143.2h-1.8M641.5 137.8h1.8" stroke="#101010" stroke-width="1" fill="none"/>
<path d="M644.5 137.4V156.7M644.5 140.3h-1.8M644.5 153.8h1.8" stroke="#f02424" stroke-width="1" fill="none"/>
<path d="M647.5 137.4V158.1M647.5 155.0h-1.8M647.5 140.5h1.8" stroke="#101010" stroke-width="1" fill="none"/>
<path d="M650.5 142.9V174.7M650.5 147.7h-1.8M650.5 169.9h1.8" stroke="#f02424" stroke-width="1" fill="none"/>
<path d="M653.5 137.4V176.1M653.5 170.3h-1.8M653.5 143.2h1.8" stroke="#101010" stroke-width="1" fill="none"/>
<path d="M656.5 141.8V159.1M656.5 156.5h-1.8M656.5 144.4h1.8" stroke="#101010" stroke-width="1" fill="none"/>
<path d="M659.5 111.5V137.5M659.5 133.6h-1.8M659.5 115.4h1.8" stroke="#101010" stroke-width="1" fill="none"/>
<path d="M662.5 113.7V129.9M662.5 116.1h-1.8M662.5 127.5h1.8" stroke="#f02424" stroke-width="1" fill="none"/>
<path d="M665.5 118.0V137.5M665.5 120.9h-1.8M665.5 134.6h1.8" stroke="#f02424" stroke-width="1" fill="none"/>
<path d="M668.5 121.2V135.3M668.5 133.2h-1.8M668.5 123.3h1.8" stroke="#101010" stroke-width="1" fill="none"/>
<path d="M670.5 120.2V132.1M670.5 122.0h-1.8M670.5 130.3h1.8" stroke="#f02424" stroke-width="1" fill="none"/>
<path d="M45.2 196.9C46.2 196.8 49.1 196.2 51.3 196.5C53.5 196.8 55.7 197.9 58.5 198.9C61.3 199.9 64.5 201.4 68.2 202.6C71.9 203.8 76.4 205.3 80.4 206.2C84.5 207.1 88.6 207.3 92.5 208.0C96.4 208.7 98.8 209.7 104.0 210.5C109.2 211.3 118.8 212.1 124.0 212.7C129.2 213.2 130.5 213.6 135.3 213.8C140.1 214.0 146.8 214.5 152.6 213.8C158.3 213.1 163.2 211.1 169.8 209.5C176.4 207.9 182.6 205.8 191.9 204.1C201.2 202.4 217.6 200.3 225.6 199.5C233.6 198.7 232.4 199.5 240.0 199.2C247.6 198.9 260.8 198.5 271.2 197.6C281.6 196.7 291.9 195.3 302.3 193.5C312.7 191.7 323.1 189.5 333.5 186.7C343.9 183.8 355.9 179.5 364.7 176.4C373.5 173.3 378.7 170.9 386.5 168.0C394.3 165.1 402.0 162.7 411.4 159.2C420.8 155.7 433.8 150.5 442.6 146.8C451.4 143.1 458.2 139.5 464.4 136.8C470.6 134.1 473.3 133.4 480.0 130.5C486.7 127.6 497.0 122.3 504.8 119.5C512.6 116.7 520.2 115.3 526.6 113.7C533.0 112.1 538.2 110.9 543.2 109.9C548.2 108.9 551.0 108.5 556.5 107.6C562.0 106.7 570.9 104.8 576.5 104.3C582.1 103.8 585.0 104.3 590.0 104.5C595.0 104.7 595.3 105.1 606.7 105.2C618.1 105.3 647.7 105.4 658.5 105.2C669.3 105.0 669.3 104.1 671.5 103.9" fill="none" stroke="#13861a" stroke-width="1.9"/>
<polyline points="45.2,213.5 47.6,209.2 49.5,203.2 51.0,200.2 53.1,202.6 55.5,212.9 57.3,223.8 59.2,233.5 61.1,245.0 62.4,263.2 63.7,278.8 65.0,295.6 67.0,308.6 68.9,313.2 70.9,307.3 73.5,299.5 76.1,300.8 78.7,297.0 81.3,280.7 83.2,289.2 84.5,292.4 86.5,280.1 88.0,265.8 90.1,250.0 94.2,243.8 98.4,237.6 102.0,235.5 104.6,232.9 107.2,236.6 109.3,242.3 111.7,243.3 114.5,237.6 116.6,234.0 119.2,231.9 120.7,229.3 122.8,230.8 124.4,234.0 125.9,225.1 128.0,219.9 130.1,214.2 132.2,202.8 134.2,206.4 136.0,209.0 138.9,205.4 141.5,202.8 143.1,207.5 144.9,213.7 146.7,202.8 148.1,195.0 149.1,181.8 151.2,165.6 153.6,147.6 156.8,149.0 159.5,144.2 163.0,140.0 164.4,122.7 165.8,103.3 166.9,111.6 168.5,127.5 171.3,130.7 174.8,119.2 177.5,127.5 180.7,147.6 183.1,149.0 186.6,144.9 189.6,153.2 192.8,147.6 195.6,141.4 198.3,160.1 201.5,158.0 204.8,164.9 208.0,147.6 212.9,146.9 214.9,135.2 219.1,109.5 221.6,122.7 225.1,116.5 228.1,140.0 231.6,134.5 235.0,133.1 240.6,124.1 243.5,128.2 249.0,125.5 254.5,137.2 260.8,124.8 264.2,127.5 267.0,122.7 270.2,130.3 273.2,125.5 276.7,112.3 279.5,110.9 282.2,113.0 285.7,128.2 288.5,133.1 291.2,154.6 294.0,117.9 295.4,123.4 300.2,162.9 303.7,156.6 309.3,161.5 312.7,154.6 315.5,151.8 319.0,135.2 321.7,119.2 324.5,124.8 326.2,113.9 329.7,100.0 333.1,88.3 336.6,84.8 339.4,90.4 342.1,64.8 344.9,72.4 348.4,57.1 351.1,43.3 354.3,61.3 357.4,55.8 360.8,50.2 363.6,56.5 366.4,46.8 369.8,53.0 372.6,49.5 375.4,55.1 377.9,55.8 381.4,63.1 384.7,56.3 386.8,59.9 389.9,53.7 393.0,65.1 395.6,73.4 398.7,68.2 401.8,72.9 404.9,74.0 407.7,79.7 410.6,62.5 413.8,81.8 417.1,71.7 420.5,62.7 423.0,53.0 425.4,65.5 428.2,83.5 431.6,91.8 434.7,86.2 437.9,93.2 441.3,100.1 444.8,97.3 449.6,87.6 453.1,86.2 455.9,76.6 458.6,84.2 462.1,77.2 465.1,71.7 468.3,73.8 471.8,77.9 474.3,86.9 477.3,86.2 480.1,84.2 482.9,93.9 484.9,80.7 487.0,64.1 489.8,54.4 492.3,55.1 495.1,49.5 498.1,55.8 500.9,52.3 504.3,68.2 507.1,66.2 510.6,92.0 512.2,109.9 515.5,112.6 518.9,118.2 521.1,106.5 524.4,101.0 528.3,96.0 531.1,101.0 534.4,100.4 537.5,79.9 539.9,79.7 542.7,85.5 545.5,88.3 548.8,98.2 554.9,86.6 556.5,106.5 557.4,121.0 560.8,122.5 563.3,142.2 566.4,130.8 569.6,138.1 572.7,159.9 575.8,150.5 578.9,150.5 581.0,172.4 583.1,193.2 585.8,196.3 589.3,199.4 592.4,201.5 596.6,218.1 601.8,211.9 608.6,199.4 612.2,205.6 617.4,198.4 621.1,203.6 625.7,195.2 629.8,193.2 632.6,174.3 636.9,182.9 641.2,177.5 644.9,198.1 647.7,190.5 650.5,225.1 653.1,195.9 654.2,179.7 657.5,177.5 660.1,149.4 662.9,151.5 665.7,174.3 668.3,153.7 671.5,167.8" fill="none" stroke="#1414e6" stroke-width="1.8" stroke-linejoin="round"/>
</g>
<g clip-path="url(#c1)">
<line x1="45.5" y1="379.0" x2="670" y2="379.0" stroke="#000" stroke-width="2.3" stroke-linecap="round" stroke-dasharray="0.9 5.87"/>
<line x1="45.5" y1="413.6" x2="670" y2="413.6" stroke="#000" stroke-width="2.3" stroke-linecap="round" stroke-dasharray="0.9 5.87"/>
<polyline points="45.5,389.5 48.5,401.4 51.3,403.2 54.0,397.7 57.6,400.5 60.4,417.7 63.1,428.6 66.7,435.0 71.3,434.1 75.8,426.8 80.4,408.6 83.1,395.0 87.6,381.4 93.1,366.8 95.8,366.8 99.5,368.6 104.9,364.6 108.5,370.5 111.3,381.4 114.9,393.2 117.6,383.2 120.4,368.6 124.0,370.5 128.5,373.2 132.7,367.7 136.7,373.2 142.2,377.7 145.8,385.9 148.5,387.7 152.2,374.1 156.7,361.4 162.2,358.6 165.8,358.6 171.3,375.0 174.9,394.1 179.5,397.7 182.0,410.0 186.4,425.0 191.8,414.1 196.4,405.9 200.0,405.9 204.5,420.5 207.3,403.2 211.8,391.4 218.2,373.2 224.5,379.5 230.0,397.7 234.5,414.1 240.9,394.1 247.3,379.5 252.7,390.5 258.2,409.5 262.7,390.5 267.3,365.0 271.8,377.7 279.1,364.1 283.6,374.1 290.0,417.7 297.3,389.5 303.6,403.2 309.1,425.0 312.7,426.8 316.0,405.0 320.5,370.5 325.1,365.0 328.7,363.2 334.2,356.8 338.7,356.3 345.1,366.8 348.7,362.3 352.4,363.2 357.8,372.3 364.2,384.1 369.6,395.9 372.4,387.7 376.9,396.8 381.5,411.4 385.1,406.8 389.6,388.6 392.4,401.4 397.8,412.3 402.4,412.3 406.9,406.8 411.5,386.8 417.8,378.6 422.4,361.4 426.0,366.8 430.5,395.9 435.1,419.5 441.5,415.0 446.9,406.8 452.4,388.6 455.6,370.5 460.2,363.2 464.7,366.8 469.3,374.1 473.8,394.1 478.4,414.1 482.9,419.5 488.4,390.5 492.9,368.6 497.5,365.9 502.9,376.8 507.5,401.4 512.0,423.2 518.4,433.2 523.8,421.4 528.4,390.5 532.0,365.0 534.7,362.3 539.3,365.0 544.7,375.9 550.2,399.5 554.7,403.2 559.3,414.1 563.3,429.5 567.5,419.5 572.0,418.6 577.5,412.3 581.1,408.6 586.5,418.6 592.5,427.7 597.1,425.0 600.7,410.5 604.4,394.1 609.8,378.6 614.4,373.2 618.0,377.7 620.7,382.3 625.3,378.6 628.9,375.0 632.5,366.8 636.2,374.1 640.7,375.0 644.4,393.2 648.0,401.4 650.7,423.2 653.5,395.9 656.2,381.4 659.8,362.3 662.5,363.2 666.2,371.4 669.8,380.5 672.0,390.5" fill="none" stroke="#e6e6dc" stroke-width="1" stroke-linejoin="round"/>
<path d="M45.8 380.5C46.2 382.0 47.6 386.5 48.5 389.5C49.4 392.5 50.4 396.6 51.3 398.6C52.2 400.6 53.0 400.8 54.0 401.4C55.0 402.0 56.0 400.9 57.1 402.3C58.2 403.7 59.3 406.3 60.4 409.5C61.5 412.7 62.5 417.9 63.6 421.4C64.7 424.9 65.7 428.5 66.7 430.5C67.7 432.5 68.4 432.8 69.5 433.2C70.6 433.6 71.9 433.7 73.1 432.6C74.3 431.5 75.5 429.4 76.7 426.8C77.9 424.2 79.0 421.0 80.4 416.8C81.8 412.6 83.4 406.5 84.9 401.4C86.4 396.2 88.1 390.0 89.5 385.9C90.9 381.8 91.9 379.7 93.1 376.8C94.3 373.9 95.2 370.0 96.7 368.6C98.2 367.2 100.5 368.8 102.2 368.6C103.9 368.5 105.5 367.4 106.7 367.7C107.9 368.0 108.4 368.5 109.5 370.5C110.6 372.5 111.9 376.6 113.1 379.5C114.3 382.4 115.5 387.2 116.7 387.7C117.9 388.2 119.2 384.3 120.4 382.3C121.6 380.3 122.8 377.9 124.0 375.9C125.2 373.9 126.1 371.2 127.6 370.5C129.1 369.8 131.3 371.1 133.1 371.4C134.9 371.7 136.8 371.4 138.5 372.3C140.2 373.2 141.7 375.3 143.1 376.8C144.5 378.3 145.6 380.2 146.7 381.4C147.8 382.6 148.4 384.7 149.5 384.1C150.6 383.5 151.8 380.7 153.1 377.7C154.4 374.7 156.2 368.8 157.6 365.9C159.0 363.0 159.9 361.8 161.3 360.5C162.7 359.2 164.4 357.5 165.8 358.1C167.2 358.7 168.1 360.7 169.5 364.1C170.9 367.5 172.5 374.1 174.0 378.6C175.5 383.2 177.2 387.8 178.5 391.4C179.8 395.0 181.0 396.8 182.0 400.0C183.0 403.2 183.0 406.9 184.5 410.5C186.0 414.1 188.9 421.1 190.9 421.4C192.9 421.7 194.6 414.9 196.4 412.3C198.2 409.7 200.3 406.2 201.8 405.9C203.3 405.6 204.1 409.9 205.5 410.5C206.9 411.1 208.3 412.5 210.0 409.5C211.7 406.5 213.7 397.8 215.5 392.3C217.3 386.9 219.4 379.2 220.9 376.8C222.4 374.4 223.0 374.8 224.5 377.7C226.0 380.6 227.9 388.8 230.0 394.1C232.1 399.4 235.0 409.5 237.3 409.5C239.6 409.5 241.6 398.6 243.6 394.1C245.6 389.6 247.6 384.0 249.1 382.3C250.6 380.6 250.9 380.8 252.7 384.1C254.5 387.4 257.9 401.9 260.0 402.3C262.1 402.8 263.8 391.8 265.5 386.8C267.2 381.8 268.2 373.8 270.0 372.3C271.8 370.8 274.3 378.2 276.4 377.7C278.5 377.2 281.2 369.9 282.7 369.5C284.2 369.1 283.8 369.1 285.5 375.0C287.2 380.9 290.1 401.8 292.7 405.0C295.3 408.2 298.5 392.7 300.9 394.1C303.3 395.5 305.3 408.2 307.3 413.2C309.3 418.2 311.2 422.5 312.7 424.1C314.2 425.7 315.0 427.1 316.2 423.0C317.4 418.9 318.4 406.4 319.6 399.5C320.8 392.6 322.1 386.4 323.3 381.4C324.5 376.4 325.7 372.1 326.9 369.5C328.1 366.9 329.3 367.4 330.5 365.9C331.7 364.4 332.8 361.9 334.2 360.5C335.6 359.1 337.2 357.4 338.7 357.4C340.2 357.4 341.8 359.5 343.3 360.5C344.8 361.5 346.1 362.8 347.8 363.2C349.5 363.6 351.6 362.6 353.3 363.2C355.0 363.8 356.3 364.5 357.8 366.8C359.3 369.1 360.9 373.9 362.4 376.8C363.9 379.7 365.5 382.0 366.9 384.1C368.2 386.2 369.1 387.8 370.5 389.5C371.9 391.2 373.7 393.2 375.1 394.1C376.5 395.0 377.3 393.6 378.7 395.0C380.1 396.4 381.9 400.2 383.3 402.3C384.7 404.4 385.8 408.0 386.9 407.7C387.9 407.4 388.2 401.7 389.6 400.5C391.0 399.3 393.6 399.1 395.1 400.5C396.6 401.9 397.3 406.4 398.7 408.6C400.1 410.8 401.8 413.4 403.3 413.7C404.8 414.0 406.3 413.2 407.8 410.5C409.3 407.8 410.9 402.2 412.4 397.7C413.9 393.1 415.4 386.7 416.9 383.2C418.4 379.7 420.0 379.3 421.5 376.8C423.0 374.3 424.6 369.1 426.0 368.3C427.4 367.6 428.2 367.4 429.6 372.3C431.0 377.2 432.8 390.1 434.2 397.7C435.6 405.3 436.7 414.7 438.2 417.7C439.7 420.7 441.4 418.0 443.3 415.9C445.2 413.8 448.2 407.9 449.6 405.0C451.1 402.1 450.9 402.5 452.0 398.6C453.1 394.7 455.0 386.7 456.5 381.4C458.0 376.1 459.4 369.6 461.1 366.8C462.8 364.0 464.8 363.7 466.5 364.6C468.2 365.5 469.7 369.2 471.1 372.3C472.5 375.4 473.3 378.1 474.7 383.2C476.1 388.3 477.9 397.8 479.3 403.2C480.7 408.6 481.7 415.3 482.9 415.9C484.1 416.5 485.1 411.9 486.5 406.8C487.9 401.7 489.6 390.9 491.1 385.0C492.6 379.1 494.2 374.4 495.6 371.4C497.0 368.4 498.1 366.8 499.3 367.2C500.5 367.6 501.7 370.7 502.9 374.1C504.1 377.5 505.1 382.2 506.5 387.7C507.9 393.1 509.6 400.9 511.1 406.8C512.6 412.7 514.1 419.3 515.6 423.2C517.1 427.1 518.7 429.8 520.2 430.1C521.7 430.4 523.3 429.5 524.7 425.0C526.1 420.5 527.2 410.5 528.4 403.2C529.6 395.9 531.0 387.2 532.0 381.4C533.0 375.6 533.6 371.6 534.7 368.6C535.8 365.6 537.0 363.6 538.4 363.2C539.8 362.8 541.5 364.1 542.9 365.9C544.2 367.7 545.3 370.6 546.5 374.1C547.7 377.6 548.7 382.6 550.2 386.8C551.7 391.0 553.8 395.2 555.6 399.5C557.4 403.8 559.4 408.5 561.1 412.3C562.8 416.1 564.1 420.8 565.6 422.3C567.1 423.8 568.8 422.2 570.2 421.4C571.6 420.6 572.7 418.6 574.2 417.7C575.7 416.8 577.8 416.6 579.3 415.9C580.8 415.1 581.5 412.8 582.9 413.2C584.3 413.6 586.0 416.8 587.5 418.6C589.0 420.4 590.1 422.7 591.6 424.1C593.1 425.5 594.8 427.2 596.2 426.8C597.6 426.4 598.6 424.7 599.8 421.4C601.0 418.1 602.1 411.6 603.5 406.8C604.9 402.0 606.5 396.5 608.0 392.3C609.5 388.1 611.1 384.1 612.5 381.4C613.9 378.7 614.8 376.8 616.2 376.3C617.6 375.8 619.0 378.2 620.7 378.6C622.4 379.0 624.5 379.2 626.2 378.6C627.9 378.0 629.2 376.1 630.7 375.0C632.2 373.9 633.8 372.0 635.3 371.9C636.8 371.8 638.3 372.2 639.8 374.1C641.3 376.0 642.9 379.3 644.4 383.2C645.9 387.1 647.6 393.8 648.9 397.7C650.2 401.6 650.8 405.9 652.0 406.8C653.2 407.7 654.9 406.5 656.2 403.2C657.5 399.9 658.8 391.5 659.8 386.8C660.8 382.1 661.5 378.5 662.5 375.0C663.5 371.5 664.7 366.3 665.8 365.9C666.9 365.4 667.9 370.0 668.9 372.3C669.9 374.6 671.1 378.3 671.6 379.5" fill="none" stroke="#8e1a9c" stroke-width="2.1" stroke-linejoin="round"/>
</g>
<g clip-path="url(#c2)">
<line x1="45.5" y1="484.2" x2="670" y2="484.2" stroke="#000" stroke-width="2.3" stroke-linecap="round" stroke-dasharray="0.9 5.87"/>
<line x1="45.5" y1="537.5" x2="670" y2="537.5" stroke="#000" stroke-width="2.3" stroke-linecap="round" stroke-dasharray="0.9 5.87"/>
<polyline points="44.9,520.7 49.5,514.4 54.0,507.1 58.5,506.2 64.0,509.8 69.5,518.0 74.0,529.8 77.6,538.0 83.1,543.5 88.5,542.5 94.0,536.2 99.5,527.1 104.0,514.4 109.5,498.0 114.9,487.1 118.5,481.6 124.0,477.1 129.5,475.3 134.9,475.3 140.4,477.1 145.8,478.9 151.3,481.6 157.6,481.6 164.0,478.9 169.5,476.2 174.9,475.8 180.0,479.8 185.5,488.0 191.8,499.8 198.2,512.5 203.6,525.3 209.1,531.6 214.5,534.4 220.0,527.1 225.5,512.5 231.8,503.1 238.2,501.3 245.5,506.2 252.7,509.8 260.0,512.5 266.4,512.5 271.8,508.9 278.2,497.1 284.5,488.9 290.9,490.7 298.2,499.8 305.5,508.9 312.7,516.2 318.0,522.0 323.3,522.5 328.7,514.4 334.2,498.9 339.6,485.3 346.9,473.5 352.4,470.7 361.5,472.5 370.5,476.2 378.7,480.7 386.0,487.1 393.3,498.9 399.6,508.9 405.1,518.0 410.5,522.5 417.8,519.8 423.3,511.6 430.5,503.5 436.9,501.6 443.3,510.7 450.5,519.8 456.0,522.0 458.4,519.8 464.7,509.8 471.1,499.8 475.6,492.5 481.1,490.4 488.4,493.5 496.5,495.3 504.7,490.7 510.2,488.0 516.5,495.3 521.1,510.7 526.5,525.3 532.0,535.3 537.5,533.5 544.7,521.6 552.0,508.0 557.5,499.8 562.9,503.5 569.3,514.4 575.6,526.2 582.9,535.3 590.2,539.8 595.3,543.5 604.4,543.5 611.6,540.7 618.9,534.4 625.3,525.3 630.7,510.7 636.2,497.1 640.7,488.0 644.4,485.3 649.8,489.8 655.3,497.1 660.7,501.6 664.4,502.0 668.0,498.9 671.3,495.3" fill="none" stroke="#9a1a92" stroke-width="1.8" stroke-dasharray="3.8 2.6"/>
<polyline points="44.9,510.7 47.6,508.9 51.3,501.6 54.5,500.2 57.6,505.3 61.3,514.4 64.9,527.1 68.5,538.0 72.2,547.1 76.7,547.1 81.3,543.5 85.8,539.8 90.4,532.5 94.9,523.5 99.5,512.5 103.1,499.8 106.7,488.9 111.3,480.7 114.9,475.8 119.5,475.3 123.1,476.2 127.6,475.3 132.2,475.3 135.8,478.0 138.5,480.7 142.2,480.7 144.9,484.4 148.5,484.9 153.1,481.3 157.6,478.4 161.3,475.3 164.9,472.2 169.5,476.2 173.1,479.5 177.6,480.7 181.3,485.3 183.6,493.5 188.2,501.6 192.7,514.4 197.3,526.2 201.8,536.2 205.1,542.0 209.1,536.2 213.6,531.6 218.2,510.7 222.7,499.8 225.5,496.5 231.8,500.7 236.4,506.7 240.0,507.1 243.6,511.1 248.2,508.9 252.7,510.7 258.2,517.1 262.7,513.5 267.3,509.8 270.9,502.5 274.5,490.7 279.1,480.7 282.7,481.6 287.3,494.4 291.3,506.2 294.5,503.5 298.2,508.9 300.9,516.2 305.5,518.9 309.1,520.7 314.5,530.7 316.0,530.7 319.6,523.5 324.2,512.5 328.7,498.0 333.3,482.5 336.0,475.3 339.6,473.5 342.4,469.8 346.0,471.1 351.5,469.8 356.0,472.9 361.5,474.4 366.0,477.1 370.5,480.2 376.0,482.5 382.4,488.0 388.7,498.9 392.4,507.1 396.0,518.9 401.5,523.5 406.9,528.0 410.5,519.8 415.1,517.1 419.6,509.8 425.1,494.4 429.6,500.7 435.1,505.3 439.6,518.0 444.2,527.1 448.7,525.3 453.3,521.6 457.5,514.4 462.0,504.4 466.5,493.5 471.1,486.2 477.5,487.5 480.2,491.6 483.8,498.9 489.3,499.5 494.7,490.7 499.3,485.3 501.5,481.3 505.6,485.3 509.3,489.8 513.8,510.7 519.3,531.6 524.7,540.2 530.2,534.4 535.6,527.1 540.2,516.2 546.5,505.3 551.1,497.1 554.7,493.5 559.3,508.0 562.9,520.7 567.5,528.0 572.0,540.7 576.5,538.0 581.1,536.5 584.7,540.7 588.0,541.6 591.6,543.5 596.2,546.7 600.7,544.4 605.3,540.7 609.8,536.2 615.3,530.7 620.7,521.6 626.2,509.8 629.8,496.2 632.5,483.8 636.2,482.0 640.7,481.3 643.5,487.1 647.1,492.5 650.7,510.4 654.4,508.9 658.0,504.4 662.5,494.4 665.8,493.5 668.9,484.4 671.6,485.3" fill="none" stroke="#1a1aff" stroke-width="1.8" stroke-linejoin="round"/>
</g>
<rect x="45" y="2" width="386" height="11.5" fill="#ececec"/>
<rect x="45" y="13" width="285" height="12" fill="#ececec"/>
<path d="M51.4 3.2V11.7M49 9.4H51.4M51.4 6.4H54" stroke="#111" stroke-width="1" fill="none"/>
<text class="ax" x="56.9" y="10.6" font-size="8.6" fill="#1a1a2e" textLength="141.5" lengthAdjust="spacingAndGlyphs">EUR/USD Spot [EURUSD FXD&#160;&#160;1 Stunde]</text>
<text class="ax" x="203.9" y="10.6" font-size="8.6" fill="#1a1a2e" textLength="81.6" lengthAdjust="spacingAndGlyphs">13.11.2009 23:00:00 -</text>
<text x="287.9" y="10.6" font-size="8.6" fill="#ee2c3c" textLength="34.3" lengthAdjust="spacingAndGlyphs">O:1,4921</text>
<text class="ax" x="324.2" y="10.6" font-size="8.6" fill="#1a1a2e" textLength="68.5" lengthAdjust="spacingAndGlyphs">H:1,4923 L:1,4902</text>
<text x="394.7" y="10.6" font-size="8.6" fill="#ee2c3c" textLength="34.6" lengthAdjust="spacingAndGlyphs">C:1,4902</text>
<path d="M46.3 20.5L49.1 15.9L53.3 21.1L55.9 17.2" stroke="#111" stroke-width="0.9" fill="none"/>
<text class="ax" x="56.9" y="21.6" font-size="8.6" fill="#1a1a2e" textLength="182.1" lengthAdjust="spacingAndGlyphs">Relative Strength Index [Close, 120, 45, 55, Nein]</text>
<text x="242.3" y="21.6" font-size="8.6" fill="#2a2ae0" textLength="29.2" lengthAdjust="spacingAndGlyphs">50,0635</text>
<text class="ax" x="275.0" y="21.6" font-size="8.6" fill="#1a1a2e" textLength="52.5" lengthAdjust="spacingAndGlyphs">{EURUSD FXD}</text>
<text x="45.8" y="34.6" font-size="10" fill="#141418" stroke="#141418" stroke-width="0.25">&#169;</text>
<text x="55.6" y="34.2" font-size="8.8" fill="#141418" stroke="#141418" stroke-width="0.3" textLength="99" lengthAdjust="spacingAndGlyphs">www.tradesignalonline.com</text>
<rect x="45" y="341.2" width="341" height="11.4" fill="#ececec"/>
<path d="M46.3 349.1L49.1 344.5L53.3 349.7L55.9 345.8" stroke="#111" stroke-width="0.9" fill="none"/>
<text class="ax" x="56.6" y="350.2" font-size="8.6" fill="#1a1a2e" textLength="136.8" lengthAdjust="spacingAndGlyphs">Stochastic Slow [5, 3, 3, 70, 30, Nein]</text>
<text x="196.5" y="350.2" font-size="8.6" fill="#fafafa" textLength="64.1" lengthAdjust="spacingAndGlyphs">Slow %K 55,8212</text>
<text x="262.7" y="350.2" font-size="8.6" fill="#8e1a9c" textLength="64.4" lengthAdjust="spacingAndGlyphs">Slow %D 68,2782</text>
<text class="ax" x="330.3" y="350.2" font-size="8.6" fill="#1a1a2e" textLength="53.2" lengthAdjust="spacingAndGlyphs">{EURUSD FXD}</text>
<rect x="45" y="455.4" width="356" height="11" fill="#ececec"/>
<path d="M46.3 463.1L49.1 458.5L53.3 463.7L55.9 459.8" stroke="#111" stroke-width="0.9" fill="none"/>
<text class="ax" x="56.9" y="464.0" font-size="8.6" fill="#1a1a2e" textLength="151.9" lengthAdjust="spacingAndGlyphs">Stochastic Slow(2) [12, 6, 6, 80, 20, Nein]</text>
<text x="212.0" y="464.0" font-size="8.6" fill="#2a2aff" textLength="64.2" lengthAdjust="spacingAndGlyphs">Slow %K 77,6747</text>
<text x="278.0" y="464.0" font-size="8.6" fill="#9a1a9a" textLength="64.5" lengthAdjust="spacingAndGlyphs">Slow %D 68,9649</text>
<text class="ax" x="345.6" y="464.0" font-size="8.6" fill="#1a1a2e" textLength="51.9" lengthAdjust="spacingAndGlyphs">{EURUSD FXD}</text>
<text class="ax" x="19.5" y="10.2" font-size="8.6" fill="#1a1a2e">RSI</text>
<line x1="40" y1="24.7" x2="42.8" y2="24.7" stroke="#222" stroke-width="0.9"/>
<text class="ax" x="38.4" y="27.9" font-size="8.6" fill="#1a1a2e" text-anchor="end">56</text>
<line x1="40" y1="48.7" x2="42.8" y2="48.7" stroke="#222" stroke-width="0.9"/>
<text class="ax" x="38.4" y="51.9" font-size="8.6" fill="#1a1a2e" text-anchor="end">55</text>
<line x1="40" y1="72.8" x2="42.8" y2="72.8" stroke="#222" stroke-width="0.9"/>
<text class="ax" x="38.4" y="76.0" font-size="8.6" fill="#1a1a2e" text-anchor="end">54</text>
<line x1="40" y1="96.9" x2="42.8" y2="96.9" stroke="#222" stroke-width="0.9"/>
<text class="ax" x="38.4" y="100.1" font-size="8.6" fill="#1a1a2e" text-anchor="end">53</text>
<line x1="40" y1="121.0" x2="42.8" y2="121.0" stroke="#222" stroke-width="0.9"/>
<text class="ax" x="38.4" y="124.2" font-size="8.6" fill="#1a1a2e" text-anchor="end">52</text>
<line x1="40" y1="145.1" x2="42.8" y2="145.1" stroke="#222" stroke-width="0.9"/>
<text class="ax" x="38.4" y="148.3" font-size="8.6" fill="#1a1a2e" text-anchor="end">51</text>
<line x1="40" y1="169.2" x2="42.8" y2="169.2" stroke="#222" stroke-width="0.9"/>
<text class="ax" x="38.4" y="172.4" font-size="8.6" fill="#1a1a2e" text-anchor="end">50</text>
<line x1="40" y1="193.3" x2="42.8" y2="193.3" stroke="#222" stroke-width="0.9"/>
<text class="ax" x="38.4" y="196.5" font-size="8.6" fill="#1a1a2e" text-anchor="end">49</text>
<line x1="40" y1="217.4" x2="42.8" y2="217.4" stroke="#222" stroke-width="0.9"/>
<text class="ax" x="38.4" y="220.6" font-size="8.6" fill="#1a1a2e" text-anchor="end">48</text>
<line x1="40" y1="241.5" x2="42.8" y2="241.5" stroke="#222" stroke-width="0.9"/>
<text class="ax" x="38.4" y="244.7" font-size="8.6" fill="#1a1a2e" text-anchor="end">47</text>
<line x1="40" y1="265.6" x2="42.8" y2="265.6" stroke="#222" stroke-width="0.9"/>
<text class="ax" x="38.4" y="268.8" font-size="8.6" fill="#1a1a2e" text-anchor="end">46</text>
<line x1="40" y1="289.6" x2="42.8" y2="289.6" stroke="#222" stroke-width="0.9"/>
<text class="ax" x="38.4" y="292.8" font-size="8.6" fill="#1a1a2e" text-anchor="end">45</text>
<line x1="40" y1="313.7" x2="42.8" y2="313.7" stroke="#222" stroke-width="0.9"/>
<text class="ax" x="38.4" y="316.9" font-size="8.6" fill="#1a1a2e" text-anchor="end">44</text>
<text class="ax" x="734" y="10.5" font-size="8.6" fill="#1a1a2e">$</text>
<line x1="731.5" y1="18.5" x2="734.5" y2="18.5" stroke="#222" stroke-width="0.9"/>
<text class="ax" x="736.8" y="21.7" font-size="8.6" fill="#1a1a2e" textLength="24" lengthAdjust="spacingAndGlyphs">1,5100</text>
<line x1="731.5" y1="47.1" x2="734.5" y2="47.1" stroke="#222" stroke-width="0.9"/>
<text class="ax" x="736.8" y="50.3" font-size="8.6" fill="#1a1a2e" textLength="24" lengthAdjust="spacingAndGlyphs">1,5050</text>
<line x1="731.5" y1="75.8" x2="734.5" y2="75.8" stroke="#222" stroke-width="0.9"/>
<text class="ax" x="736.8" y="79.0" font-size="8.6" fill="#1a1a2e" textLength="24" lengthAdjust="spacingAndGlyphs">1,5000</text>
<line x1="731.5" y1="104.4" x2="734.5" y2="104.4" stroke="#222" stroke-width="0.9"/>
<text class="ax" x="736.8" y="107.6" font-size="8.6" fill="#1a1a2e" textLength="24" lengthAdjust="spacingAndGlyphs">1,4950</text>
<line x1="731.5" y1="133.0" x2="734.5" y2="133.0" stroke="#222" stroke-width="0.9"/>
<text class="ax" x="736.8" y="136.2" font-size="8.6" fill="#1a1a2e" textLength="24" lengthAdjust="spacingAndGlyphs">1,4900</text>
<line x1="731.5" y1="161.6" x2="734.5" y2="161.6" stroke="#222" stroke-width="0.9"/>
<text class="ax" x="736.8" y="164.8" font-size="8.6" fill="#1a1a2e" textLength="24" lengthAdjust="spacingAndGlyphs">1,4850</text>
<line x1="731.5" y1="190.3" x2="734.5" y2="190.3" stroke="#222" stroke-width="0.9"/>
<text class="ax" x="736.8" y="193.5" font-size="8.6" fill="#1a1a2e" textLength="24" lengthAdjust="spacingAndGlyphs">1,4800</text>
<line x1="731.5" y1="218.9" x2="734.5" y2="218.9" stroke="#222" stroke-width="0.9"/>
<text class="ax" x="736.8" y="222.1" font-size="8.6" fill="#1a1a2e" textLength="24" lengthAdjust="spacingAndGlyphs">1,4750</text>
<line x1="731.5" y1="247.5" x2="734.5" y2="247.5" stroke="#222" stroke-width="0.9"/>
<text class="ax" x="736.8" y="250.7" font-size="8.6" fill="#1a1a2e" textLength="24" lengthAdjust="spacingAndGlyphs">1,4700</text>
<line x1="731.5" y1="276.2" x2="734.5" y2="276.2" stroke="#222" stroke-width="0.9"/>
<text class="ax" x="736.8" y="279.4" font-size="8.6" fill="#1a1a2e" textLength="24" lengthAdjust="spacingAndGlyphs">1,4650</text>
<line x1="731.5" y1="304.8" x2="734.5" y2="304.8" stroke="#222" stroke-width="0.9"/>
<text class="ax" x="736.8" y="308.0" font-size="8.6" fill="#1a1a2e" textLength="24" lengthAdjust="spacingAndGlyphs">1,4600</text>
<line x1="731.5" y1="333.4" x2="734.5" y2="333.4" stroke="#222" stroke-width="0.9"/>
<text class="ax" x="736.8" y="336.6" font-size="8.6" fill="#1a1a2e" textLength="24" lengthAdjust="spacingAndGlyphs">1,4550</text>
<text class="ax" x="7.8" y="349.3" font-size="8.6" fill="#1a1a2e" textLength="25.2" lengthAdjust="spacingAndGlyphs">SSTOC</text>
<text class="ax" x="733" y="349.3" font-size="8.6" fill="#1a1a2e" textLength="24.8" lengthAdjust="spacingAndGlyphs">SSTOC</text>
<line x1="40" y1="395.7" x2="42.8" y2="395.7" stroke="#222" stroke-width="0.9"/>
<text class="ax" x="38.4" y="398.9" font-size="8.6" fill="#1a1a2e" text-anchor="end">50</text>
<line x1="40" y1="439.8" x2="42.8" y2="439.8" stroke="#222" stroke-width="0.9"/>
<text class="ax" x="38.4" y="443.0" font-size="8.6" fill="#1a1a2e" text-anchor="end">0</text>
<line x1="731.5" y1="395.7" x2="734.5" y2="395.7" stroke="#222" stroke-width="0.9"/>
<text class="ax" x="736.6" y="398.9" font-size="8.6" fill="#1a1a2e">50</text>
<line x1="731.5" y1="439.8" x2="734.5" y2="439.8" stroke="#222" stroke-width="0.9"/>
<text class="ax" x="736.6" y="443.0" font-size="8.6" fill="#1a1a2e">0</text>
<text class="ax" x="7.8" y="463.3" font-size="8.6" fill="#1a1a2e" textLength="25.2" lengthAdjust="spacingAndGlyphs">SSTOC</text>
<text class="ax" x="733" y="463.3" font-size="8.6" fill="#1a1a2e" textLength="24.8" lengthAdjust="spacingAndGlyphs">SSTOC</text>
<line x1="40" y1="510.6" x2="42.8" y2="510.6" stroke="#222" stroke-width="0.9"/>
<text class="ax" x="38.4" y="513.8" font-size="8.6" fill="#1a1a2e" text-anchor="end">50</text>
<line x1="40" y1="555.6" x2="42.8" y2="555.6" stroke="#222" stroke-width="0.9"/>
<text class="ax" x="38.4" y="558.8" font-size="8.6" fill="#1a1a2e" text-anchor="end">0</text>
<line x1="731.5" y1="510.6" x2="734.5" y2="510.6" stroke="#222" stroke-width="0.9"/>
<text class="ax" x="736.6" y="513.8" font-size="8.6" fill="#1a1a2e">50</text>
<line x1="731.5" y1="555.6" x2="734.5" y2="555.6" stroke="#222" stroke-width="0.9"/>
<text class="ax" x="736.6" y="558.8" font-size="8.6" fill="#1a1a2e">0</text>
<line x1="102.5" y1="565.5" x2="102.5" y2="568.8" stroke="#222" stroke-width="0.9"/>
<text class="ax" x="103.8" y="575.5" font-size="8.6" fill="#1a1a2e">4</text>
<line x1="174.5" y1="565.5" x2="174.5" y2="568.8" stroke="#222" stroke-width="0.9"/>
<text class="ax" x="175.8" y="575.5" font-size="8.6" fill="#1a1a2e">5</text>
<line x1="246.5" y1="565.5" x2="246.5" y2="568.8" stroke="#222" stroke-width="0.9"/>
<text class="ax" x="247.8" y="575.5" font-size="8.6" fill="#1a1a2e">6</text>
<line x1="318.5" y1="565.5" x2="318.5" y2="568.8" stroke="#222" stroke-width="0.9"/>
<text class="ax" x="319.8" y="575.5" font-size="8.6" fill="#1a1a2e">9</text>
<line x1="386.5" y1="565.5" x2="386.5" y2="568.8" stroke="#222" stroke-width="0.9"/>
<text class="ax" x="387.8" y="575.5" font-size="8.6" fill="#1a1a2e">10</text>
<line x1="459.2" y1="565.5" x2="459.2" y2="568.8" stroke="#222" stroke-width="0.9"/>
<text class="ax" x="460.5" y="575.5" font-size="8.6" fill="#1a1a2e">11</text>
<line x1="531.4" y1="565.5" x2="531.4" y2="568.8" stroke="#222" stroke-width="0.9"/>
<text class="ax" x="532.7" y="575.5" font-size="8.6" fill="#1a1a2e">12</text>
<line x1="602.6" y1="565.5" x2="602.6" y2="568.8" stroke="#222" stroke-width="0.9"/>
<text class="ax" x="603.9" y="575.5" font-size="8.6" fill="#1a1a2e">13</text>
<line x1="674.7" y1="565.5" x2="674.7" y2="568.8" stroke="#222" stroke-width="0.9"/>
<text class="ax" x="676.0" y="575.5" font-size="8.6" fill="#1a1a2e">14</text>
<line x1="66.4" y1="565.5" x2="66.4" y2="568.8" stroke="#222" stroke-width="0.9"/>
<line x1="138.6" y1="565.5" x2="138.6" y2="568.8" stroke="#222" stroke-width="0.9"/>
<line x1="210.7" y1="565.5" x2="210.7" y2="568.8" stroke="#222" stroke-width="0.9"/>
<line x1="282.3" y1="565.5" x2="282.3" y2="568.8" stroke="#222" stroke-width="0.9"/>
<line x1="351.6" y1="565.5" x2="351.6" y2="568.8" stroke="#222" stroke-width="0.9"/>
<line x1="423.0" y1="565.5" x2="423.0" y2="568.8" stroke="#222" stroke-width="0.9"/>
<line x1="495.3" y1="565.5" x2="495.3" y2="568.8" stroke="#222" stroke-width="0.9"/>
<line x1="566.4" y1="565.5" x2="566.4" y2="568.8" stroke="#222" stroke-width="0.9"/>
<line x1="638.7" y1="565.5" x2="638.7" y2="568.8" stroke="#222" stroke-width="0.9"/>
<line x1="714.0" y1="565.5" x2="714.0" y2="568.8" stroke="#222" stroke-width="0.9"/>
</svg></body></html>
